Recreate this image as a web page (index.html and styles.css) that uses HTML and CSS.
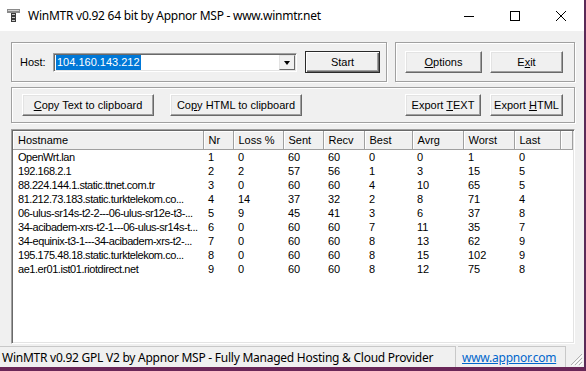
FILE: index.html
```html
<!DOCTYPE html>
<html lang="en">
<head>
    <meta charset="UTF-8">
    <title>WinMTR</title>
    <link rel="stylesheet" href="styles.css">
</head>
<body>
    <div class="window">
        <div class="titlebar">
            <svg class="app-icon" width="13" height="13" viewBox="0 0 13 13">
                <rect x="0" y="0" width="13" height="4" fill="#8a8a8a"/>
                <rect x="1" y="1" width="11" height="1" fill="#d0d0d0"/>
                <rect x="4" y="4" width="5" height="9" fill="#3a3a3a"/>
                <rect x="5" y="5" width="3" height="1" fill="#c8c8c8"/>
                <rect x="5" y="8" width="3" height="1" fill="#c8c8c8"/>
                <rect x="5" y="11" width="3" height="1" fill="#c8c8c8"/>
            </svg>
            <span class="title">WinMTR v0.92 64 bit by Appnor MSP - www.winmtr.net</span>
            <div class="caption-buttons">
                <span class="cap-btn">
                    <svg width="10" height="10" viewBox="0 0 10 10"><rect x="0" y="5" width="10" height="1" fill="#000"/></svg>
                </span>
                <span class="cap-btn">
                    <svg width="10" height="10" viewBox="0 0 10 10"><rect x="0.5" y="0.5" width="9" height="9" fill="none" stroke="#000"/></svg>
                </span>
                <span class="cap-btn">
                    <svg width="10" height="10" viewBox="0 0 10 10"><path d="M0 0 L10 10 M10 0 L0 10" stroke="#000" stroke-width="1"/></svg>
                </span>
            </div>
        </div>

        <div class="client">
            <div class="row-top">
                <div class="group group-host">
                    <label class="host-label" for="host">Host:</label>
                    <div class="combo" id="host">
                        <span class="combo-text"><span class="selected">104.160.143.212</span></span>
                        <span class="combo-arrow"></span>
                    </div>
                    <button class="btn btn-default btn-start">Start</button>
                </div>
                <div class="group group-actions">
                    <button class="btn btn-options"><u>O</u>ptions</button>
                    <button class="btn btn-exit">E<u>x</u>it</button>
                </div>
            </div>

            <div class="group group-export">
                <button class="btn btn-copy"><u>C</u>opy Text to clipboard</button>
                <button class="btn btn-copy btn-copy-html">Co<u>p</u>y HTML to clipboard</button>
                <button class="btn btn-export-text">Export <u>T</u>EXT</button>
                <button class="btn btn-export-html">Export <u>H</u>TML</button>
            </div>

            <div class="list">
                <table class="hops">
                    <colgroup>
                        <col class="c-host"><col class="c-nr"><col class="c-loss"><col class="c-sent"><col class="c-recv">
                        <col class="c-best"><col class="c-avrg"><col class="c-worst"><col class="c-last"><col>
                    </colgroup>
                    <thead>
                        <tr>
                            <th>Hostname</th><th>Nr</th><th>Loss %</th><th>Sent</th><th>Recv</th>
                            <th>Best</th><th>Avrg</th><th>Worst</th><th>Last</th><th></th>
                        </tr>
                    </thead>
                    <tbody>
                        <tr><td>OpenWrt.lan</td><td>1</td><td>0</td><td>60</td><td>60</td><td>0</td><td>0</td><td>1</td><td>0</td><td></td></tr>
                        <tr><td>192.168.2.1</td><td>2</td><td>2</td><td>57</td><td>56</td><td>1</td><td>3</td><td>15</td><td>5</td><td></td></tr>
                        <tr><td>88.224.144.1.static.ttnet.com.tr</td><td>3</td><td>0</td><td>60</td><td>60</td><td>4</td><td>10</td><td>65</td><td>5</td><td></td></tr>
                        <tr><td>81.212.73.183.static.turktelekom.co...</td><td>4</td><td>14</td><td>37</td><td>32</td><td>2</td><td>8</td><td>71</td><td>4</td><td></td></tr>
                        <tr><td>06-ulus-sr14s-t2-2---06-ulus-sr12e-t3-...</td><td>5</td><td>9</td><td>45</td><td>41</td><td>3</td><td>6</td><td>37</td><td>8</td><td></td></tr>
                        <tr><td>34-acibadem-xrs-t2-1---06-ulus-sr14s-t...</td><td>6</td><td>0</td><td>60</td><td>60</td><td>7</td><td>11</td><td>35</td><td>7</td><td></td></tr>
                        <tr><td>34-equinix-t3-1---34-acibadem-xrs-t2-...</td><td>7</td><td>0</td><td>60</td><td>60</td><td>8</td><td>13</td><td>62</td><td>9</td><td></td></tr>
                        <tr><td>195.175.48.18.static.turktelekom.co...</td><td>8</td><td>0</td><td>60</td><td>60</td><td>8</td><td>15</td><td>102</td><td>9</td><td></td></tr>
                        <tr><td>ae1.er01.ist01.riotdirect.net</td><td>9</td><td>0</td><td>60</td><td>60</td><td>8</td><td>12</td><td>75</td><td>8</td><td></td></tr>
                    </tbody>
                </table>
            </div>
        </div>

        <div class="statusbar">
            <div class="pane pane-main">WinMTR v0.92 GPL V2 by Appnor MSP - Fully Managed Hosting &amp; Cloud Provider</div>
            <div class="pane pane-link"><a href="#">www.appnor.com</a></div>
            <svg class="gripper" width="13" height="13" viewBox="0 0 13 13">
                <path d="M12 1 L1 12 M12 5 L5 12 M12 9 L9 12" stroke="#b0b0b0" stroke-width="1"/>
                <path d="M13 2 L2 13 M13 6 L6 13 M13 10 L10 13" stroke="#fff" stroke-width="1"/>
            </svg>
        </div>
    </div>
</body>
</html>
```

FILE: styles.css
```css
body {
    margin: 0;
    background-color: #6a2758;
}
.window {
    width: 584px;
    height: 367px;
    background-color: #f0f0f0;
    border-right: 2px solid #5a2b58;
    border-bottom: 4px solid #6a2758;
    font-family: "Liberation Sans", Arial, sans-serif;
    font-size: 11px;
    color: #000;
}
.titlebar {
    height: 31px;
    background-color: #fff;
    display: flex;
    align-items: center;
}
.app-icon {
    margin-left: 7px;
    margin-top: -1px;
}
.title {
    margin-left: 8px;
    font-family: "Noto Sans", sans-serif;
    font-size: 12px;
    letter-spacing: -0.25px;
}
.caption-buttons {
    margin-left: auto;
    display: flex;
}
.cap-btn {
    width: 46px;
    height: 31px;
    display: flex;
    align-items: center;
    justify-content: center;
}
.client {
    height: 313px;
    box-sizing: border-box;
    padding: 11px 9px 0 11px;
    display: flex;
    flex-direction: column;
}
.row-top {
    display: flex;
    gap: 8px;
    height: 40px;
}
.group {
    border: 1px solid #a0a0a0;
    box-shadow: inset 1px 1px 0 #fff, 1px 1px 0 #fff;
    box-sizing: border-box;
    display: flex;
    align-items: center;
}
.group-host {
    width: 376px;
    padding-left: 8px;
}
.group-actions {
    width: 180px;
    padding-left: 9px;
    gap: 8px;
}
.host-label {
    width: 33px;
    flex-shrink: 0;
}
.combo {
    width: 244px;
    height: 19px;
    box-sizing: border-box;
    background-color: #fff;
    border: 1px solid;
    border-color: #a0a0a0 #fff #fff #a0a0a0;
    box-shadow: inset 1px 1px 0 #696969, inset -1px -1px 0 #e3e3e3;
    display: flex;
    align-items: center;
    padding: 0 1px 0 2px;
}
.combo-text {
    flex: 1;
    display: flex;
    align-items: center;
}
.selected {
    display: inline-block;
    height: 15px;
    line-height: 15px;
    background-color: #0078d7;
    color: #fff;
    padding: 0 1px;
}
.combo-arrow {
    width: 16px;
    height: 15px;
    box-sizing: border-box;
    background-color: #f0f0f0;
    border: 1px solid;
    border-color: #e3e3e3 #696969 #696969 #e3e3e3;
    position: relative;
}
.combo-arrow::after {
    content: "";
    position: absolute;
    left: 4px;
    top: 5px;
    border-left: 3.5px solid transparent;
    border-right: 3.5px solid transparent;
    border-top: 4px solid #000;
}
.btn {
    height: 22px;
    box-sizing: border-box;
    background-color: #f0f0f0;
    border: 1px solid;
    border-color: #fff #696969 #696969 #fff;
    box-shadow: inset -1px -1px 0 #a0a0a0, inset 1px 1px 0 #e3e3e3;
    font-family: "Liberation Sans", Arial, sans-serif;
    font-size: 11px;
    color: #000;
    padding: 0;
    flex-shrink: 0;
}
.btn-default {
    border: 1px solid #2a2a2a;
    box-shadow: inset 1px 1px 0 #fff, inset -1px -1px 0 #696969, inset -2px -2px 0 #a0a0a0;
}
.btn-start {
    width: 75px;
    margin-left: 8px;
}
.btn-options {
    width: 77px;
}
.btn-exit {
    width: 73px;
}
.group-export {
    margin-top: 5px;
    height: 36px;
    padding: 0 11px 0 10px;
}
.btn-copy {
    width: 132px;
}
.btn-copy-html {
    margin-left: 16px;
}
.btn-export-text {
    width: 76px;
    margin-left: auto;
}
.btn-export-html {
    width: 73px;
    margin-left: 9px;
}
.list {
    margin-top: 6px;
    height: 215px;
    box-sizing: border-box;
    background-color: #fff;
    border: 1px solid;
    border-color: #a0a0a0 #fff #fff #a0a0a0;
    box-shadow: inset 1px 1px 0 #696969, inset -1px -1px 0 #e3e3e3;
    padding: 1px 1px 0 1px;
    overflow: hidden;
}
.hops {
    width: 100%;
    border-collapse: collapse;
    table-layout: fixed;
}
.c-host { width: 190px; }
.c-nr { width: 30px; }
.c-loss { width: 50px; }
.c-sent { width: 40px; }
.c-recv { width: 41px; }
.c-best { width: 48px; }
.c-avrg { width: 51px; }
.c-worst { width: 51px; }
.c-last { width: 46px; }
.hops th {
    height: 18px;
    padding: 0 0 0 5px;
    text-align: left;
    font-weight: normal;
    background-color: #f0f0f0;
    border-right: 1px solid #a0a0a0;
    border-bottom: 1px solid #a0a0a0;
    box-shadow: inset 1px 1px 0 #fff;
    box-sizing: border-box;
}
.hops td {
    height: 14px;
    line-height: 14px;
    padding: 0 0 0 5px;
    white-space: nowrap;
    overflow: hidden;
}
.hops td:first-child {
    letter-spacing: -0.45px;
    padding-right: 2px;
}
.statusbar {
    margin-top: 2px;
    height: 21px;
    display: flex;
    font-family: "Noto Sans", sans-serif;
    font-size: 12px;
    letter-spacing: -0.25px;
    position: relative;
}
.pane {
    box-sizing: border-box;
    border-top: 1px solid #c8c8c8;
    border-right: 1px solid #c8c8c8;
    display: flex;
    align-items: center;
    padding-left: 2px;
}
.pane-main {
    width: 456px;
}
.pane-link {
    width: 108px;
    margin-left: 2px;
    padding-left: 4px;
}
.pane-link a {
    color: #0066cc;
}
.gripper {
    position: absolute;
    right: 1px;
    bottom: 1px;
}
```
